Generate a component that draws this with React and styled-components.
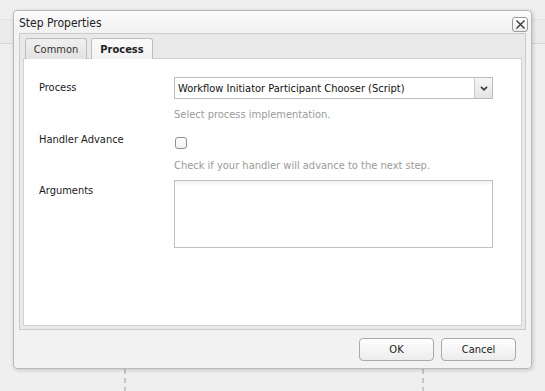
import styled, { createGlobalStyle } from "styled-components";

const GlobalStyle = createGlobalStyle`
  html, body {
    margin: 0;
    padding: 0;
    background: #efefef;
  }
  * {
    box-sizing: border-box;
  }
`;

const font = `"DejaVu Sans Condensed", "DejaVu Sans", Verdana, sans-serif`;

export default function App() {
  return (
    <>
      <GlobalStyle />
      <Page>
        <ToolBand />
        <Connector style={{ left: 124 }} />
        <Connector style={{ left: 422 }} />
        <Dialog>
          <Header>
            <Title>Step Properties</Title>
            <CloseButton aria-label="Close">
              <svg width="11" height="11" viewBox="0 0 11 11">
                <path d="M1.5 1.5 L9.5 9.5 M9.5 1.5 L1.5 9.5" stroke="#333" strokeWidth="1.3" />
              </svg>
            </CloseButton>
          </Header>
          <TabPanel>
            <TabStrip>
              <Tab>Common</Tab>
              <Tab $active>Process</Tab>
            </TabStrip>
            <Content>
              <Row>
                <Label>Process</Label>
                <Field>
                  <Select>
                    <SelectText>Workflow Initiator Participant Chooser (Script)</SelectText>
                    <SelectArrow>
                      <svg width="8" height="5" viewBox="0 0 8 5">
                        <path d="M1 0.8 L4 3.8 L7 0.8" stroke="#3a3a3a" strokeWidth="1.7" fill="none" />
                      </svg>
                    </SelectArrow>
                  </Select>
                  <Help>Select process implementation.</Help>
                </Field>
              </Row>
              <Row $gap={7}>
                <Label>Handler Advance</Label>
                <Field>
                  <Checkbox />
                  <Help $top={10}>Check if your handler will advance to the next step.</Help>
                </Field>
              </Row>
              <Row $gap={7}>
                <Label>Arguments</Label>
                <Field>
                  <TextArea />
                </Field>
              </Row>
            </Content>
          </TabPanel>
          <Footer>
            <Button>OK</Button>
            <Button>Cancel</Button>
          </Footer>
        </Dialog>
      </Page>
    </>
  );
}

const Page = styled.div`
  position: relative;
  width: 545px;
  height: 391px;
  overflow: hidden;
  background: #efefef;
  padding-top: 19px;
`;

const ToolBand = styled.div`
  height: 25px;
  background: #ebebeb;
  border-top: 1px solid #e2e2e2;
  border-bottom: 1px solid #d6d6d6;
`;

const Connector = styled.div`
  position: absolute;
  top: 369px;
  width: 2px;
  height: 30px;
  background: repeating-linear-gradient(
    to bottom,
    #c6c6c6 0,
    #c6c6c6 5px,
    transparent 5px,
    transparent 9px
  );
`;

const Dialog = styled.div`
  position: absolute;
  left: 13px;
  top: 10px;
  width: 519px;
  height: 359px;
  display: flex;
  flex-direction: column;
  background: linear-gradient(to bottom, #fbfbfb 0, #f2f2f2 22px, #f2f2f2 100%);
  border: 1px solid #b9b9b9;
  border-radius: 4px;
  box-shadow: 1px 1px 4px rgba(0, 0, 0, 0.18);
  font-family: ${font};
  font-size: 11px;
  color: #1a1a1a;
`;

const Header = styled.div`
  height: 22px;
  display: flex;
  align-items: center;
  justify-content: space-between;
  padding: 0 3px 0 5px;
`;

const Title = styled.span`
  font-size: 12px;
  color: #222;
  padding-top: 2px;
`;

const CloseButton = styled.button`
  width: 16px;
  height: 15px;
  margin-top: 5px;
  padding: 0;
  display: flex;
  align-items: center;
  justify-content: center;
  background: linear-gradient(to bottom, #ffffff, #ececec);
  border: 1px solid #9c9c9c;
  border-radius: 3px;
`;

const TabPanel = styled.div`
  margin: 0 5px;
  height: 297px;
  display: flex;
  flex-direction: column;
  background: #e9e9e9;
  border: 1px solid #cbcbcb;
  padding: 0 3px 3px;
`;

const TabStrip = styled.div`
  display: flex;
  gap: 4px;
  padding: 4px 0 0 2px;
  height: 25px;
  border-bottom: 1px solid #cfcfcf;
`;

const Tab = styled.div`
  width: 62px;
  display: flex;
  align-items: center;
  justify-content: center;
  font-size: 11px;
  font-weight: ${(p) => (p.$active ? "bold" : "normal")};
  color: ${(p) => (p.$active ? "#222" : "#333")};
  background: ${(p) =>
    p.$active
      ? "linear-gradient(to bottom, #fafafa, #f2f2f2)"
      : "linear-gradient(to bottom, #f0f0f0, #e2e2e2)"};
  border: 1px solid #bdbdbd;
  border-bottom: none;
  border-radius: 3px 3px 0 0;
  margin-bottom: ${(p) => (p.$active ? "-1px" : "0")};
  height: ${(p) => (p.$active ? "22px" : "21px")};
`;

const Content = styled.div`
  flex: 1;
  background: #ffffff;
  border: 1px solid #d2d2d2;
  border-top: none;
  padding: 18px 0 0 15px;
`;

const Row = styled.div`
  display: grid;
  grid-template-columns: 135px 319px;
  margin-top: ${(p) => p.$gap || 0}px;
`;

const Label = styled.div`
  padding-top: 4px;
  line-height: 14px;
  font-size: 11px;
  color: #1a1a1a;
`;

const Field = styled.div`
  display: flex;
  flex-direction: column;
`;

const Select = styled.div`
  height: 22px;
  display: flex;
  align-items: stretch;
  border: 1px solid #bcbcbc;
  background: #fff;
`;

const SelectText = styled.div`
  flex: 1;
  display: flex;
  align-items: center;
  padding-left: 3px;
  font-size: 11px;
  color: #111;
`;

const SelectArrow = styled.div`
  width: 18px;
  display: flex;
  align-items: center;
  justify-content: center;
  border-left: 1px solid #c8c8c8;
  background: linear-gradient(to bottom, #f6f6f6, #e4e4e4);
`;

const Help = styled.div`
  margin-top: ${(p) => p.$top || 9}px;
  line-height: 14px;
  font-size: 11px;
  color: #9a9a9a;
`;

const Checkbox = styled.div`
  width: 12px;
  height: 12px;
  margin: 8px 0 0 1px;
  border: 1px solid #8e8e8e;
  border-radius: 3px;
  background: linear-gradient(to bottom, #ffffff, #f1f1f1);
`;

const TextArea = styled.div`
  height: 68px;
  border: 1px solid #c0c0c0;
  background: linear-gradient(to bottom, #f0f0f0 0, #ffffff 5px);
`;

const Footer = styled.div`
  flex: 1;
  display: flex;
  justify-content: flex-end;
  align-items: flex-start;
  gap: 7px;
  padding: 8px 15px 0 0;
`;

const Button = styled.button`
  width: 75px;
  height: 23px;
  font-family: ${font};
  font-size: 11px;
  color: #222;
  background: linear-gradient(to bottom, #ffffff, #ececec);
  border: 1px solid #a9a9a9;
  border-radius: 4px;
  padding: 0;
`;
